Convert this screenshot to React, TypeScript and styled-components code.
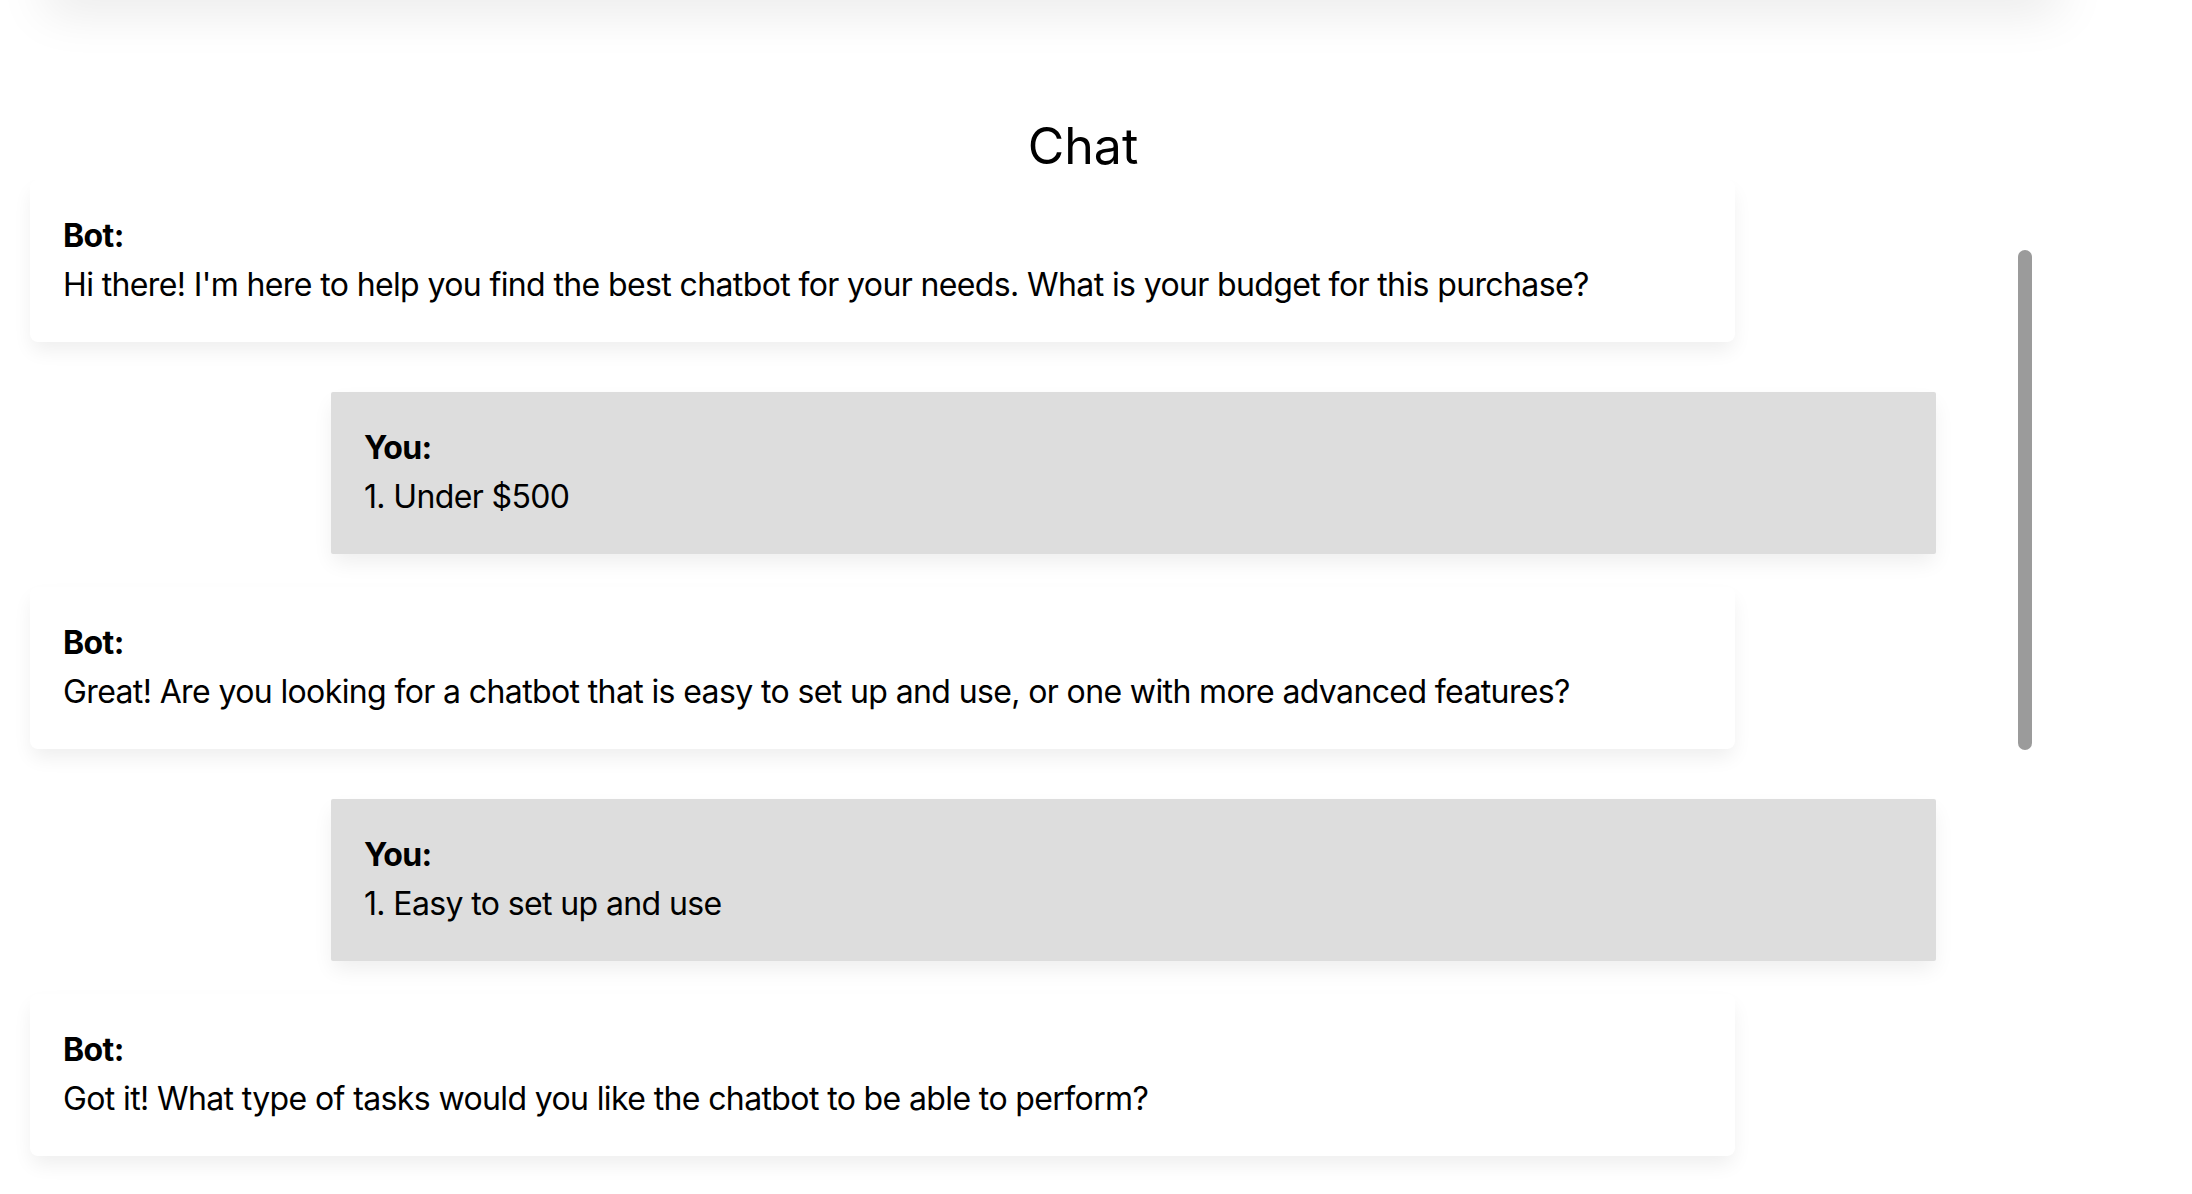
import React from 'react';
import styled, { createGlobalStyle } from 'styled-components';

const GlobalStyle = createGlobalStyle`
  html, body {
    margin: 0;
    padding: 0;
    background: #ffffff;
    overflow: hidden;
  }
  body {
    font-family: Inter, "Noto Sans", "Liberation Sans", sans-serif;
    color: #000;
  }
`;

const Page = styled.div`
  display: flex;
  flex-direction: column;
  height: 100vh;
  overflow: hidden;
`;

// header sitting just above the viewport, only its shadow shows
const TopBar = styled.div`
  height: 40px;
  margin: -40px 132px 0 45px;
  background: #fff;
  box-shadow: 0 10px 50px rgba(0, 0, 0, 0.1);
  flex-shrink: 0;
`;

const Title = styled.h1`
  margin: 116px 26px 4px 0;
  font-size: 50px;
  line-height: 60px;
  font-weight: 400;
  text-align: center;
`;

const ChatWindow = styled.div`
  position: relative;
  flex: 1;
  min-height: 0;
  width: 2036px;
`;

const ScrollArea = styled.div`
  height: 100%;
  box-sizing: border-box;
  padding-left: 30px;
  overflow-y: auto;
  scrollbar-width: none;
`;

// overlay scrollbar thumb (macOS style)
const ScrollThumb = styled.div`
  position: absolute;
  top: 70px;
  right: 4px;
  width: 14px;
  height: 500px;
  border-radius: 7px;
  background: #9b9b9b;
`;

const MessageList = styled.div`
  display: flex;
  flex-direction: column;
  padding-bottom: 60px;
`;

const Message = styled.div<{ $fromUser?: boolean }>`
  box-sizing: border-box;
  padding: 31px 33px 33px;
  font-size: 32px;
  line-height: 49px;
  letter-spacing: -0.62px;
  width: ${(p) => (p.$fromUser ? '80%' : '85%')};
  margin: ${(p) => (p.$fromUser ? '50px 0 33px 15%' : '0')};
  background: ${(p) => (p.$fromUser ? '#dddddd' : '#ffffff')};
  border-radius: ${(p) => (p.$fromUser ? '2px' : '8px')};
  box-shadow: 0 10px 20px -2px rgba(0, 0, 0, 0.07);
`;

const Sender = styled.strong`
  display: block;
  font-weight: 700;
`;

const Text = styled.div``;

interface IMessage {
  fromUser: boolean;
  text: string;
}

const messages: IMessage[] = [
  {
    fromUser: false,
    text: "Hi there! I'm here to help you find the best chatbot for your needs. What is your budget for this purchase?",
  },
  { fromUser: true, text: '1. Under $500' },
  {
    fromUser: false,
    text: 'Great! Are you looking for a chatbot that is easy to set up and use, or one with more advanced features?',
  },
  { fromUser: true, text: '1. Easy to set up and use' },
  {
    fromUser: false,
    text: 'Got it! What type of tasks would you like the chatbot to be able to perform?',
  },
];

export default function App() {
  return (
    <>
      <GlobalStyle />
      <Page>
        <TopBar />
        <Title>Chat</Title>
        <ChatWindow>
          <ScrollArea>
            <MessageList>
              {messages.map((m, i) => (
                <Message key={i} $fromUser={m.fromUser}>
                  <Sender>{m.fromUser ? 'You:' : 'Bot:'}</Sender>
                  <Text>{m.text}</Text>
                </Message>
              ))}
            </MessageList>
          </ScrollArea>
          <ScrollThumb />
        </ChatWindow>
      </Page>
    </>
  );
}
